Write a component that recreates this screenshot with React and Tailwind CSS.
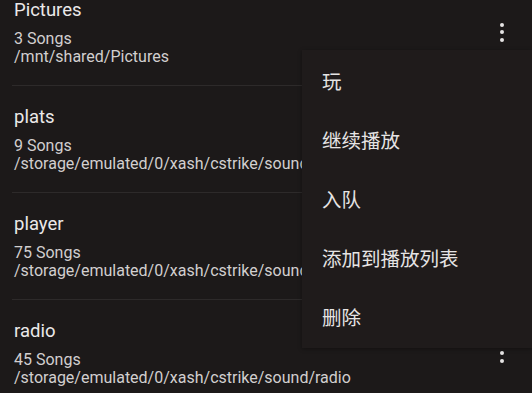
import React from "react";

const folders = [
  { name: "Pictures", count: 3, path: "/mnt/shared/Pictures" },
  { name: "plats", count: 9, path: "/storage/emulated/0/xash/cstrike/sound/plats" },
  { name: "player", count: 75, path: "/storage/emulated/0/xash/cstrike/sound/player" },
  { name: "radio", count: 45, path: "/storage/emulated/0/xash/cstrike/sound/radio" },
];

const menuItems = ["玩", "继续播放", "入队", "添加到播放列表", "删除"];

function Kebab() {
  return (
    <button className="w-[40px] h-[40px] flex flex-col items-center justify-center gap-[3.5px]">
      <span className="w-[4px] h-[4px] rounded-full bg-[#e6e4e4]" />
      <span className="w-[4px] h-[4px] rounded-full bg-[#e6e4e4]" />
      <span className="w-[4px] h-[4px] rounded-full bg-[#e6e4e4]" />
    </button>
  );
}

export default function App() {
  return (
    <div
      className="relative w-[532px] h-[393px] overflow-hidden bg-[#1c1919]"
      style={{ fontFamily: "Roboto, 'Noto Sans CJK SC', sans-serif" }}
    >
      <div className="-mt-[21px]">
        {folders.map((f, i) => (
          <div key={f.name}>
            {i > 0 && <div className="ml-[12px] h-px bg-[#2d2a2a]" />}
            <div className="h-[106px] flex items-center pl-[14px] pr-[10px]">
              <div className="flex-1 min-w-0 pt-[2px]">
                <div className="text-[18.5px] leading-[20px] text-[#ebe9e9]">{f.name}</div>
                <div className="mt-[10px] text-[16px] leading-[18px] text-[#d2cfcf]">{f.count} Songs</div>
                <div className="text-[16px] leading-[18px] text-[#d2cfcf] whitespace-nowrap">{f.path}</div>
              </div>
              <Kebab />
            </div>
          </div>
        ))}
      </div>

      {/* overflow menu */}
      <div className="absolute left-[302px] top-[50px] w-[230px] pt-[3px] bg-[#1f1b1b] shadow-[0_1px_4px_rgba(0,0,0,0.35)]">
        {menuItems.map((m) => (
          <div key={m} className="h-[59px] flex items-center pl-[20px] text-[19.5px] text-[#e6e4e4]">
            {m}
          </div>
        ))}
      </div>
    </div>
  );
}
